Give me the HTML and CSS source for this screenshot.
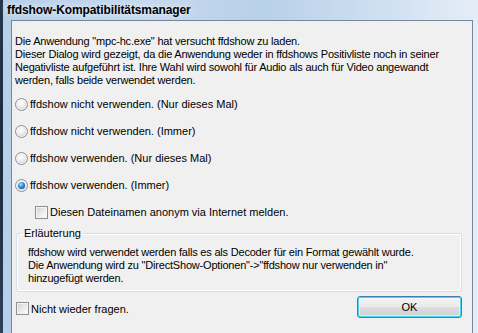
FILE: index.html
```html
<!DOCTYPE html>
<html lang="de">
<head>
    <meta charset="UTF-8">
    <title>ffdshow-Kompatibilitätsmanager</title>
    <link rel="stylesheet" href="styles.css">
</head>
<body>
<div class="screen">
    <div class="desk"></div>
    <div class="window">
        <div class="titlebar">ffdshow-Kompatibilitätsmanager</div>
        <div class="client">
            <p class="intro">Die Anwendung "mpc-hc.exe" hat versucht ffdshow zu laden.<br>
                Dieser Dialog wird gezeigt, da die Anwendung weder in ffdshows Positivliste noch in seiner<br>
                Negativliste aufgeführt ist. Ihre Wahl wird sowohl für Audio als auch für Video angewandt<br>
                werden, falls beide verwendet werden.</p>
            <ul class="options">
                <li><span class="radio"></span>ffdshow nicht verwenden. (Nur dieses Mal)</li>
                <li><span class="radio"></span>ffdshow nicht verwenden. (Immer)</li>
                <li><span class="radio"></span>ffdshow verwenden. (Nur dieses Mal)</li>
                <li><span class="radio on"></span>ffdshow verwenden. (Immer)</li>
                <li class="sub"><span class="check"></span>Diesen Dateinamen anonym via Internet melden.</li>
            </ul>
            <fieldset class="group">
                <legend>Erläuterung</legend>
                <p>ffdshow wird verwendet werden falls es als Decoder für ein Format gewählt wurde.<br>
                    Die Anwendung wird zu "DirectShow-Optionen"-&gt;"ffdshow nur verwenden in"<br>
                    hinzugefügt werden.</p>
            </fieldset>
            <div class="footer">
                <label class="again"><span class="check"></span>Nicht wieder fragen.</label>
                <button class="ok">OK</button>
            </div>
        </div>
    </div>
</div>
</body>
</html>
```

FILE: styles.css
```css
* {
    margin: 0;
    padding: 0;
    box-sizing: border-box;
}

body {
    width: 478px;
    height: 333px;
    overflow: hidden;
    font-family: "Liberation Sans", Arial, sans-serif;
    font-size: 11px;
    color: #000;
}

ul, li {
    list-style: none;
}

.screen {
    display: flex;
    height: 333px;
}

.desk {
    width: 3px;
    background: linear-gradient(to bottom, #23384d, #1a2c3e 50%, #2b4158);
}

.window {
    flex: 1;
    display: flex;
    flex-direction: column;
    padding: 0 5px 0 8px;
    background: linear-gradient(to right, #b7cfe8, #c6d9ee 30%, #b9d0e9 55%, #cfe0f1 80%, #e4edf7);
}

.titlebar {
    height: 20px;
    padding: 3px 0 0 2px;
    margin-left: -6px;
    font-size: 12px;
    font-weight: bold;
    line-height: 14px;
    letter-spacing: -0.1px;
    color: #000;
    text-shadow: 0 0 6px rgba(255, 255, 255, 0.9);
}

.client {
    flex: 1;
    padding: 14px 3px 0 3px;
    border: 1px solid #73869a;
    border-bottom: none;
    background: #f0f0f0;
}

.intro {
    line-height: 13px;
    letter-spacing: -0.2px;
}

.options {
    margin-top: 11px;
}

.options li {
    display: flex;
    align-items: center;
    height: 13px;
    margin-bottom: 14px;
    line-height: 13px;
}

.options li.sub {
    margin-bottom: 0;
    padding-left: 20px;
}

.radio {
    width: 13px;
    height: 13px;
    margin-right: 2px;
    border: 1px solid #8d9095;
    border-radius: 50%;
    background: radial-gradient(circle at 45% 40%, #ffffff, #f0f0f0 35%, #cfd0d2 75%, #b9babd);
    box-shadow: inset 0 0 0 1px rgba(255, 255, 255, 0.7);
}

.radio.on {
    position: relative;
}

.radio.on::after {
    content: "";
    position: absolute;
    left: 2px;
    top: 2px;
    width: 7px;
    height: 7px;
    border-radius: 50%;
    background: radial-gradient(circle at 40% 35%, #a8e4ff, #2f8fd4 45%, #0d4d87 85%);
}

.check {
    width: 13px;
    height: 13px;
    margin-right: 2px;
    border: 1px solid #8e8f8f;
    background: linear-gradient(135deg, #cfd0d1, #ececec 55%, #ffffff);
    box-shadow: inset 0 0 0 1px #f4f4f4;
}

.group {
    margin: 8px 7px 0 1px;
    padding: 6px 0 6px 11px;
    border: 1px solid #d5dfe5;
    border-radius: 3px;
    box-shadow: inset 0 0 0 1px #fff;
}

.group legend {
    margin-left: -6px;
    padding: 0 2px;
    line-height: 13px;
}

.group p {
    line-height: 13px;
    letter-spacing: -0.2px;
}

.footer {
    display: flex;
    align-items: center;
    justify-content: space-between;
    margin: 4px 7px 0 1px;
}

.again {
    display: flex;
    align-items: center;
    margin-top: 3px;
}

.ok {
    width: 105px;
    height: 22px;
    font-family: "Liberation Sans", Arial, sans-serif;
    font-size: 11px;
    color: #000;
    border: 1px solid #3c7fb1;
    border-radius: 3px;
    background: linear-gradient(to bottom, #f2f2f2, #ebebeb 50%, #dddddd 51%, #cfcfcf);
    box-shadow: inset 0 0 0 1px #48d4f3, inset 0 0 0 2px rgba(255, 255, 255, 0.5);
}
```
